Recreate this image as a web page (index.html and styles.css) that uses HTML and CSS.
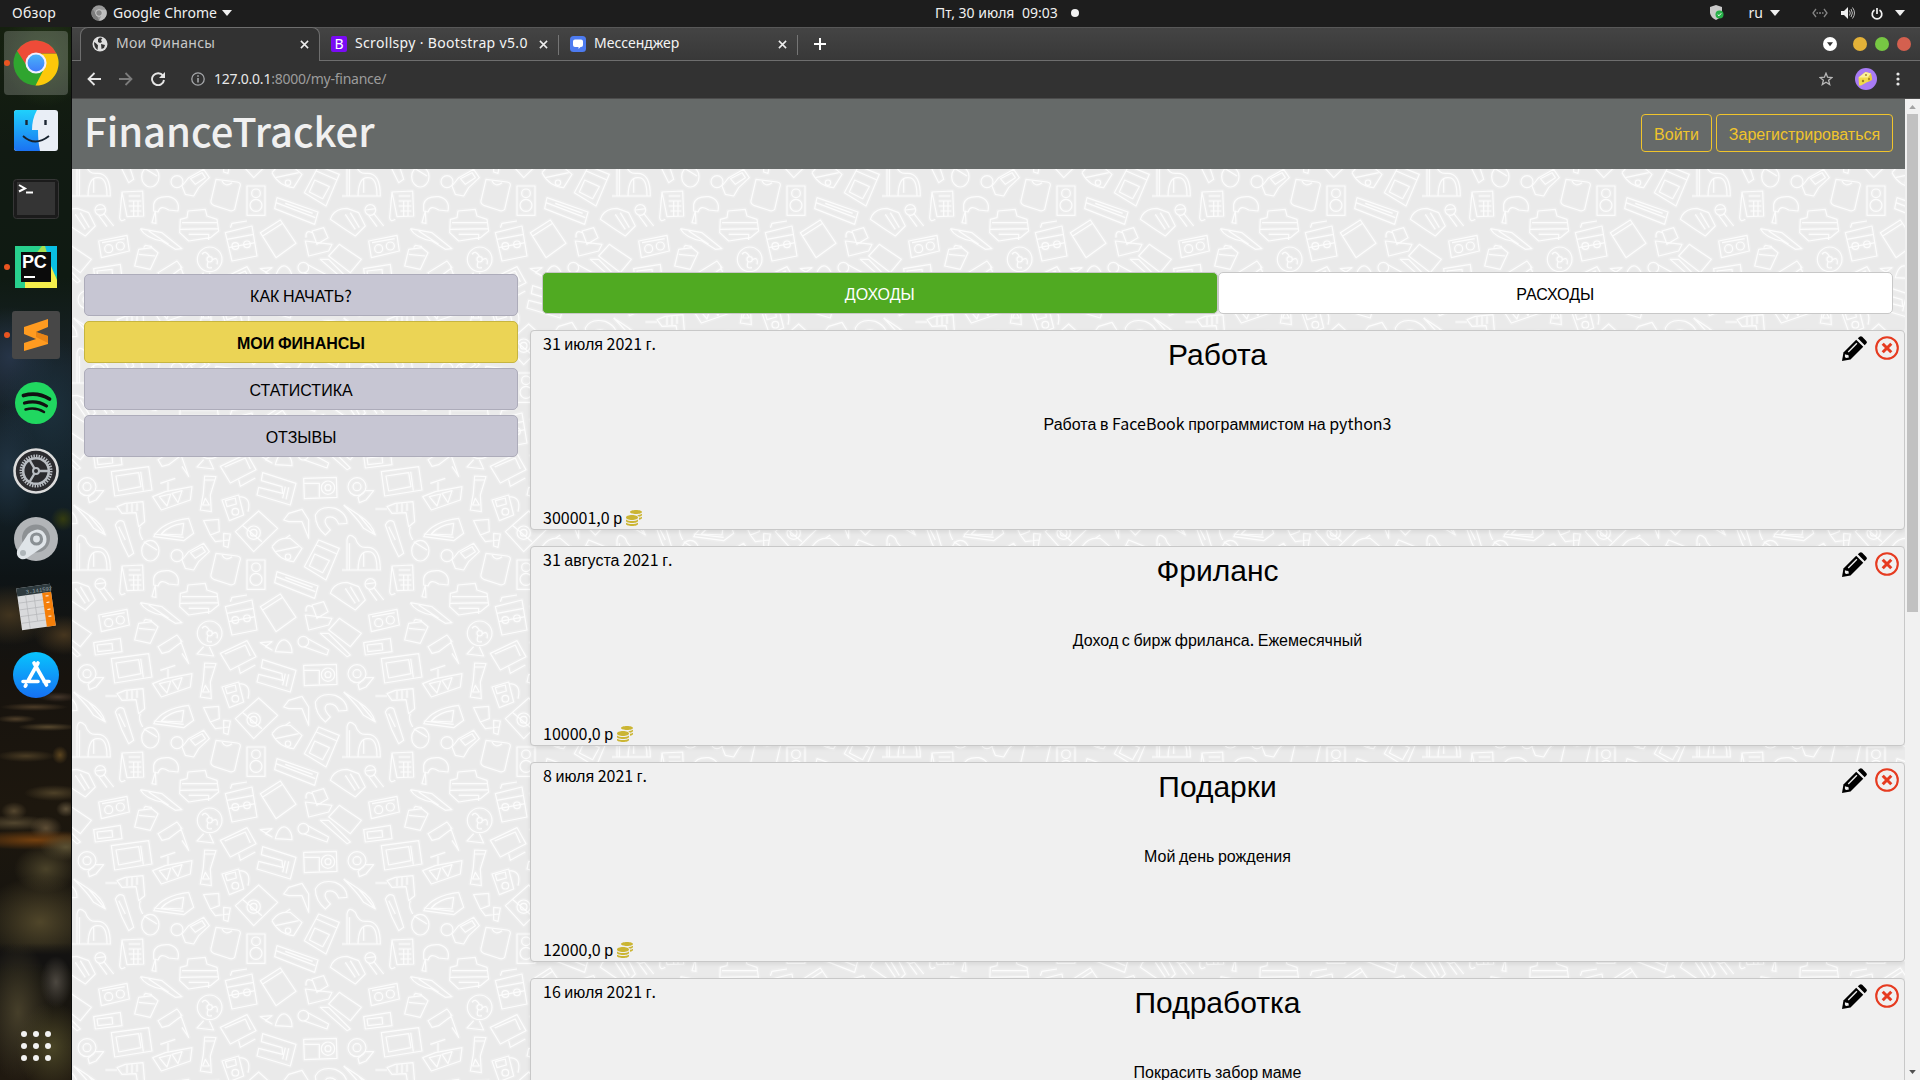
FILE: index.html
```html
<!DOCTYPE html>
<html lang="ru">
<head>
<meta charset="utf-8">
<title>Мои Финансы</title>
<link rel="stylesheet" href="styles.css">
</head>
<body>
<svg class="sprite" aria-hidden="true">
  <symbol id="pencil" viewBox="0 0 24 24">
    <path d="M1.4 15.8 13.6 3.6l6.8 6.8L8.200 22.600 0 24z"/>
    <path d="M15.200 2.200 16.900.7q1.300-1.100 2.500.1l3.900 3.900q1.200 1.200 0 2.500l-1.500 1.700z"/>
    <path d="M6 15.300 14.300 7" stroke="#efefef" stroke-width="1.300" fill="none"/>
    <path d="M2.800 17.600v2.600l1.100.8 2.700-.3-.5-2.400-1.900-.2z" fill="#efefef"/>
  </symbol>
  <symbol id="remove" viewBox="0 0 24 24">
    <circle cx="12" cy="12" r="10.800" fill="none" stroke="#e63b20" stroke-width="2.100"/>
    <path d="m7.700 7.700 8.600 8.600m0-8.600-8.600 8.600" stroke="#e63b20" stroke-width="3"/>
  </symbol>
  <symbol id="coins" viewBox="0 0 512 512">
    <path fill="#cbb533" d="M0 405.300V448c0 35.300 86 64 192 64s192-28.700 192-64v-42.700C342.700 434.400 267.200 448 192 448S41.300 434.400 0 405.300zM320 128c106 0 192-28.700 192-64S426 0 320 0 128 28.700 128 64s86 64 192 64zM0 300.400V352c0 35.300 86 64 192 64s192-28.700 192-64v-51.600c-41.300 34-116.900 51.600-192 51.600S41.300 334.400 0 300.400zm416 11c57.300-11.100 96-31.700 96-55.400v-42.700c-23.200 16.400-57.300 27.600-96 34.500v63.600zM192 160C86 160 0 195.800 0 240s86 80 192 80 192-35.800 192-80-86-80-192-80zm219.300 56.300c60-10.800 100.700-32 100.700-56.300v-42.700c-35.500 25.100-96.500 38.600-160.700 41.800 29.500 14.300 51.200 33.500 60 57.200z"/>
  </symbol>
  <symbol id="close" viewBox="0 0 10 10"><path d="m1 1 8 8m0-8-8 8" fill="none" stroke="currentColor" stroke-width="1.700"/></symbol>
  <symbol id="caret" viewBox="0 0 10 6"><path d="M0 0h10L5 6z" fill="currentColor"/></symbol>
</svg>

<div class="desktop">
  <header class="topbar">
    <div class="topbar-left">
      <span class="overview">Обзор</span>
      <svg width="16" height="16" viewBox="0 0 48 48"><circle cx="24" cy="24" r="23" fill="#9a9a9a"/><path d="M24 14h21A23 23 0 0 1 24 47l9-19z" fill="#bdbdbd"/><path d="M5 12l11 17 9 18A23 23 0 0 1 5 12z" fill="#7c7c7c"/><circle cx="24" cy="24" r="10" fill="#888" stroke="#ccc" stroke-width="3"/></svg>
      <span class="app-name">Google Chrome</span>
      <svg class="caret" width="10" height="6"><use href="#caret"/></svg>
    </div>
    <div class="topbar-clock"><span class="date">Пт, 30 июля</span><span class="time">09:03</span><i class="dot"></i></div>
    <div class="topbar-right">
      <svg class="shield" width="14" height="16" viewBox="0 0 14 16"><path d="M6 0 12 2v6q-1 5-6 7-5-2-6-7V2z" fill="#c9c9c9"/><circle cx="9.500" cy="9.500" r="4" fill="#27b049"/><path d="m7.700 9.500 1.300 1.300 2.200-2.500" stroke="#fff" fill="none"/></svg>
      <span class="lang">ru</span>
      <svg class="lang-caret" width="10" height="6"><use href="#caret"/></svg>
      <svg class="net" width="16" height="10" viewBox="0 0 16 10" fill="none" stroke="#858585" stroke-width="1.300"><path d="M4 1 1 5l3 4M12 1l3 4-3 4M4.500 5h1.500M7 5h2M10 5h1.500"/></svg>
      <svg class="volume" width="14" height="12" viewBox="0 0 14 12"><path d="M0 4h3l4-4v12L3 8H0z" fill="#eee"/><path d="M8.500 3.500q1.500 2.500 0 5M10 2q2.800 4 0 8M11.500.5q4 5.500 0 11" stroke="#bbb" fill="none"/></svg>
      <svg class="power" width="12" height="13" viewBox="0 0 12 13" fill="none" stroke="#f1f1f1" stroke-width="1.700"><path d="M3.500 3a4.800 4.800 0 1 0 5 0M6 1v6"/></svg>
      <svg width="10" height="6"><use href="#caret"/></svg>
    </div>
  </header>

  <div class="workspace">
    <nav class="dock">
      <div class="dock-item active running">
        <svg width="46" height="46" viewBox="0 0 48 48"><defs><linearGradient id="cb" x2="0" y2="1"><stop stop-color="#4ab3f8"/><stop offset="1" stop-color="#3f7dfa"/></linearGradient></defs><circle cx="24" cy="24" r="23.500" fill="#2fa52f"/><path d="M24 14h21.300A23.500 23.500 0 0 1 23.500 47.500L33 29z" fill="#fcc80a"/><path d="M4.200 11.200A23.500 23.500 0 0 1 45.300 14H24L15 28z" fill="#ee4b38"/><circle cx="24" cy="24" r="11" fill="#f1efff"/><circle cx="24" cy="24" r="8.800" fill="url(#cb)"/></svg>
      </div>
      <div class="dock-item">
        <svg width="44" height="42" viewBox="0 0 44 42"><defs><linearGradient id="fb" x2="0" y2="1"><stop stop-color="#1fd1fc"/><stop offset="1" stop-color="#1b72f2"/></linearGradient></defs><rect width="44" height="41" rx="3" fill="#e9eef6"/><path d="M3 0h20q-5 9-5 20h6q0 12 2 21H3q-3 0-3-3V3q0-3 3-3z" fill="url(#fb)"/><path d="M12.500 10v5M31.500 10v5" stroke="#1b2633" stroke-width="2.400"/><path d="M9 26q12 11 26 0" stroke="#17222e" stroke-width="1.800" fill="none"/></svg>
      </div>
      <div class="dock-item">
        <svg width="46" height="40" viewBox="0 0 46 40"><rect x=".5" y=".5" width="45" height="39" rx="3" fill="#1b1b1b" stroke="#363636"/><rect x="4" y="3" width="38" height="33" fill="#343434"/><path d="m6 6 6 3.500L6 12.500" stroke="#fff" stroke-width="2" fill="none"/><path d="M13 13.500h7" stroke="#fff" stroke-width="2"/></svg>
      </div>
      <div class="dock-item running">
        <svg width="42" height="42" viewBox="0 0 42 42"><path d="M0 0h42v42H0z" fill="#28d08d"/><path d="M27 0h15v30L32 24z" fill="#09bfe4"/><path d="M10 42V36L36 20l6 14v8z" fill="#f5ee4b"/><path d="M20 9 27 0h3l4 14z" fill="#a6e052"/><path d="M6 6h30v30H6z" fill="#0b0b0b"/><path d="M9 31h11" stroke="#fff" stroke-width="2"/></svg>
        <span class="pc-label">PC</span>
      </div>
      <div class="dock-item running">
        <svg width="48" height="48" viewBox="0 0 48 48"><rect width="48" height="48" rx="3" fill="#474747"/><path d="m12 16 24-8v8l-12 5 12 4v8l-24 7v-8l12-4-12-5z" fill="#ff9b20"/><path d="m24 21 12 4v7l-8-4-4-2z" fill="#e07c12" opacity=".7"/></svg>
      </div>
      <div class="dock-item">
        <svg width="42" height="42" viewBox="0 0 42 42" fill="none" stroke="#111" stroke-linecap="round"><circle cx="21" cy="21" r="21" fill="#20d760" stroke="none"/><path d="M8.500 13.500q14-4 26 3.500" stroke-width="3.800"/><path d="M9.500 21q12-3.500 22 3" stroke-width="3.200"/><path d="M10.500 27.500q10-3 18.500 2.500" stroke-width="2.500"/></svg>
      </div>
      <div class="dock-item">
        <svg width="46" height="46" viewBox="0 0 46 46" fill="none"><circle cx="23" cy="23" r="21.500" fill="#2b2b2f" stroke="#dcdcdc" stroke-width="2.600"/><circle cx="23" cy="23" r="15" stroke="#b8bcc2" stroke-width="3" stroke-dasharray="1.500 1.100"/><circle cx="23" cy="23" r="12.800" stroke="#b8bcc2" stroke-width="2.500"/><circle cx="23" cy="23" r="3" stroke="#b8bcc2" stroke-width="2"/><path d="M26 23h9.500M21.500 20.500 16.500 12M21.500 25.500 16.500 34" stroke="#b8bcc2" stroke-width="2.400"/></svg>
      </div>
      <div class="dock-item">
        <svg width="44" height="44" viewBox="0 0 44 44"><circle cx="22" cy="22" r="22" fill="#b2b5b8"/><circle cx="22" cy="21.500" r="14" fill="#8d9194"/><path d="m14 17-11 17q-1 6 4 8 3 1 6-1l16-11q5-4 3-11-4-8-11-6-4 1-7 4z" fill="#dfe4e8"/><circle cx="22.500" cy="22" r="5" fill="none" stroke="#8a9094" stroke-width="3.200"/><circle cx="9" cy="36" r="3" fill="#aeb5b9"/></svg>
      </div>
      <div class="dock-item">
        <svg width="42" height="48" viewBox="0 0 42 48"><g transform="rotate(-8 21 24)"><path d="M4 3h34v42H4z" fill="#d9dadc"/><path d="M4 3h34v8H4z" fill="#2e3a3e"/><path d="M29 11h9v34h-9z" fill="#f57f0a"/><path d="M4 17.800h25M4 24.600h25M4 31.400h25M4 38.200h25M12.300 11v34M20.600 11v27" stroke="#b4b6b9" stroke-width=".7"/><text x="13" y="9.500" class="calc-display">3.141592</text><path d="M32 14.500h3M32 21h3M32 28h3M32 35h3" stroke="#fff"/></g></svg>
      </div>
      <div class="dock-item">
        <svg width="46" height="46" viewBox="0 0 46 46" fill="none" stroke="#fff" stroke-width="3.600" stroke-linecap="round"><defs><linearGradient id="as" x2="0" y2="1"><stop stop-color="#08c4fd"/><stop offset="1" stop-color="#1670f3"/></linearGradient></defs><circle cx="23" cy="23" r="23" fill="url(#as)" stroke="none"/><path d="M25 11 15.500 28M21 11l12.500 22M10 29.500h15M31 29.500h5M13 33l-.7 1.200"/></svg>
      </div>
      <div class="dock-item app-grid"><i></i><i></i><i></i><i></i><i></i><i></i><i></i><i></i><i></i></div>
    </nav>

    <div class="browser">
      <div class="tabstrip">
        <div class="tab tab-active">
          <svg width="16" height="16" viewBox="0 0 16 16"><circle cx="8" cy="8" r="7.500" fill="#dedede"/><path d="M2 6q2 1 4 3.200l-.5 4.800Q2 11.500 2 6zM8 1.500 10.500 2l-1.500 2 1 2-2 1-2-1V3zM9 8l4 1-1 3-2.500 1z" fill="#323232"/></svg>
          <span class="t1">Мои Финансы</span>
          <svg class="tab-close" width="9" height="9"><use href="#close"/></svg>
        </div>
        <div class="tab">
          <span class="bs-icon">B</span>
          <span class="t2">Scrollspy · Bootstrap v5.0</span>
          <svg class="tab-close" width="9" height="9"><use href="#close"/></svg>
        </div>
        <div class="tab tab-last">
          <svg width="16" height="16" viewBox="0 0 16 16"><rect width="16" height="16" rx="3.500" fill="#4d7bf0"/><path d="M5 3.500h6q2 0 2 2V9q0 2-2 2h-.5L8.500 13V11H5Q3 11 3 9V5.500q0-2 2-2z" fill="#fff"/></svg>
          <span class="t3">Мессенджер</span>
          <svg class="tab-close" width="9" height="9"><use href="#close"/></svg>
        </div>
        <svg class="new-tab" width="12" height="12" viewBox="0 0 12 12"><path d="M6 0v12M0 6h12" stroke="#fff" stroke-width="2"/></svg>
        <div class="window-controls">
          <svg class="tab-search" width="14" height="14" viewBox="0 0 14 14"><circle cx="7" cy="7" r="7" fill="#fff"/><path d="M4 5.200h6L7 9.200z" fill="#333"/></svg>
          <i class="wc-min"></i><i class="wc-max"></i><i class="wc-close"></i>
        </div>
      </div>
      <div class="toolbar">
        <svg width="14" height="14" viewBox="0 0 14 14" fill="none" stroke="#e6e6e6" stroke-width="1.800"><path d="M14 7H1.500M7.500 1l-6 6 6 6"/></svg>
        <svg width="14" height="14" viewBox="0 0 14 14" fill="none" stroke="#7c7c7c" stroke-width="1.800"><path d="M0 7h12.500M6.500 1l6 6-6 6"/></svg>
        <svg width="14" height="14" viewBox="0 0 14 14" fill="none" stroke="#e6e6e6" stroke-width="1.900"><path d="M12 3.800A6 6 0 1 0 13 8"/><path d="M14 0v6H8z" fill="#e6e6e6" stroke="none"/></svg>
        <svg class="info" width="14" height="14" viewBox="0 0 14 14" fill="none" stroke="#a5a7aa" stroke-width="1.300"><circle cx="7" cy="7" r="6.200"/><path d="M7 6v4.500M7 3.300v1.500" stroke-width="1.600"/></svg>
        <span class="url"><b>127.0.0.1</b>:8000/my-finance/</span>
        <div class="toolbar-right">
          <svg width="14" height="14" viewBox="0 0 14 14" fill="none" stroke="#b8b8b8" stroke-width="1.300"><path d="m7 1.200 1.600 4 4.400.3-3.400 2.700 1.100 4.300L7 10.200l-3.700 2.300 1.100-4.300L1 5.500l4.400-.3z"/></svg>
          <svg class="avatar" width="22" height="22" viewBox="0 0 22 22"><circle cx="11" cy="11" r="11" fill="#a87bf5"/><path d="m3.500 9.500 7-5.500 5.500 1.500 1 6-11 6H4z" fill="#f1dc4b"/><path d="m3.500 9.500 7-5.500 5.500 1.500-3 4z" fill="#fbf09a"/><path d="m13 9.500 3-4 1 6.500-4 2z" fill="#e7c93c"/><circle cx="8" cy="13" r="1.200" fill="#9b7d25"/><circle cx="14" cy="11" r="1" fill="#9b7d25"/><circle cx="11" cy="7" r=".9" fill="#9b7d25"/></svg>
          <svg width="4" height="14" viewBox="0 0 4 14" fill="#e8e8e8"><circle cx="2" cy="2" r="1.600"/><circle cx="2" cy="7" r="1.600"/><circle cx="2" cy="12" r="1.600"/></svg>
        </div>
      </div>

      <div class="viewport">
        <div class="page">
          <header class="site-header">
            <h1 class="brand">FinanceTracker</h1>
            <div class="auth"><a class="btn-outline login">Войти</a><a class="btn-outline signup">Зарегистрироваться</a></div>
          </header>
          <div class="content">
            <aside class="menu">
              <a class="menu-item">КАК<span class="lat"> </span>НАЧАТЬ<span class="lat">?</span></a>
              <a class="menu-item current">МОИ<span class="lat"> </span>ФИНАНСЫ</a>
              <a class="menu-item">СТАТИСТИКА</a>
              <a class="menu-item">ОТЗЫВЫ</a>
            </aside>
            <main class="finance">
              <div class="switch"><a class="switch-item selected">ДОХОДЫ</a><a class="switch-item">РАСХОДЫ</a></div>
              <article class="card">
                <div class="card-date"><span class="lat">31 </span>июля<span class="lat"> 2021 </span>г<span class="lat">.</span></div>
                <div class="card-actions"><svg width="25" height="25"><use href="#pencil"/></svg><svg width="24" height="24"><use href="#remove"/></svg></div>
                <h3 class="card-title">Работа</h3>
                <p class="card-text">Работа<span class="lat"> </span>в<span class="lat"> FaceBook </span>программистом<span class="lat"> </span>на<span class="lat"> python3</span></p>
                <div class="card-sum"><span><span class="lat">300001,0 </span>р</span><svg width="16" height="16"><use href="#coins"/></svg></div>
              </article>
              <article class="card">
                <div class="card-date"><span class="lat">31 </span>августа<span class="lat"> 2021 </span>г<span class="lat">.</span></div>
                <div class="card-actions"><svg width="25" height="25"><use href="#pencil"/></svg><svg width="24" height="24"><use href="#remove"/></svg></div>
                <h3 class="card-title">Фриланс</h3>
                <p class="card-text">Доход<span class="lat"> </span>с<span class="lat"> </span>бирж<span class="lat"> </span>фриланса<span class="lat">. </span>Ежемесячный</p>
                <div class="card-sum"><span><span class="lat">10000,0 </span>р</span><svg width="16" height="16"><use href="#coins"/></svg></div>
              </article>
              <article class="card">
                <div class="card-date"><span class="lat">8 </span>июля<span class="lat"> 2021 </span>г<span class="lat">.</span></div>
                <div class="card-actions"><svg width="25" height="25"><use href="#pencil"/></svg><svg width="24" height="24"><use href="#remove"/></svg></div>
                <h3 class="card-title">Подарки</h3>
                <p class="card-text">Мой<span class="lat"> </span>день<span class="lat"> </span>рождения</p>
                <div class="card-sum"><span><span class="lat">12000,0 </span>р</span><svg width="16" height="16"><use href="#coins"/></svg></div>
              </article>
              <article class="card">
                <div class="card-date"><span class="lat">16 </span>июля<span class="lat"> 2021 </span>г<span class="lat">.</span></div>
                <div class="card-actions"><svg width="25" height="25"><use href="#pencil"/></svg><svg width="24" height="24"><use href="#remove"/></svg></div>
                <h3 class="card-title">Подработка</h3>
                <p class="card-text">Покрасить<span class="lat"> </span>забор<span class="lat"> </span>маме</p>
              </article>
            </main>
          </div>
        </div>
        <div class="scrollbar">
          <svg width="7" height="4" viewBox="0 0 10 6"><path d="M0 6h10L5 0z" fill="#a3a3a3"/></svg>
          <i class="thumb"></i>
          <svg width="7" height="4" viewBox="0 0 10 6"><path d="M0 0h10L5 6z" fill="#505050"/></svg>
        </div>
      </div>
    </div>
  </div>
</div>
</body>
</html>
```
FILE: styles.css
```css
* { box-sizing: border-box; }
body { margin: 0; width: 1920px; height: 1080px; overflow: hidden; background: #1d1d1d; font-family: "Liberation Sans", Arial, sans-serif; font-size: 16px; color: #000; }
svg { display: block; flex: none; }
.sprite { position: absolute; width: 0; height: 0; }
.lat { font-family: "Noto Sans CJK JP", sans-serif; white-space: pre; }
.desktop { display: flex; flex-direction: column; height: 1080px; }

/* System bar */
.topbar { display: grid; grid-template-columns: 935px 1fr auto; align-items: center; height: 27px; flex: none; background: #1d1d1d; color: #f0f0f0; font: 14px/26px "Noto Sans", sans-serif; white-space: nowrap; padding-bottom: 1px; }
.topbar-left { display: flex; align-items: center; padding-left: 12px; }
.overview { width: 79px; letter-spacing: .3px; }
.app-name { width: 110px; padding-left: 6px; letter-spacing: .05px; }
.caret { margin-left: 5px; }
.topbar-clock { display: flex; align-items: center; }
.date { width: 87px; }
.time { width: 49px; }
.dot { width: 8px; height: 8px; border-radius: 50%; background: #f2f2f2; }
.topbar-right { display: flex; align-items: center; justify-content: flex-end; padding-right: 15px; }
.lang { margin-left: 25px; }
.lang-caret { margin: 0 32px 0 7px; }
.volume { margin: 0 16px 0 13px; }
.power { margin-right: 12px; }

.workspace { display: flex; flex: 1; min-height: 0; }

/* Launcher */
.dock {
  display: flex; flex-direction: column; width: 72px; flex: none; padding-top: 2px; border-right: 1px solid #0b0c0c;
  background:
    radial-gradient(ellipse 36px 45px at 52px 1020px, #4a4526, transparent),
    radial-gradient(ellipse 34px 70px at 18px 985px, #463f2a, transparent),
    radial-gradient(ellipse 16px 26px at 56px 955px, #4c4740, transparent),
    linear-gradient(transparent 916px, #131211 928px, #131211 936px, transparent 946px),
    radial-gradient(ellipse 60px 46px at 40px 895px, #50462a, transparent),
    radial-gradient(ellipse 32px 24px at 46px 842px, #4a4229, transparent),
    radial-gradient(ellipse 26px 14px at 66px 820px, #5b5134, transparent),
    radial-gradient(ellipse 75px 10px at 36px 813px, #74400f, transparent),
    radial-gradient(ellipse 16px 12px at 46px 801px, #5d4d35, transparent),
    radial-gradient(ellipse 40px 8px at 14px 796px, #52462f, transparent),
    radial-gradient(ellipse 13px 9px at 14px 784px, #55472f, transparent),
    radial-gradient(ellipse 10px 8px at 66px 782px, #5e513a, transparent),
    radial-gradient(ellipse 30px 8px at 54px 766px, #4e4128, transparent),
    radial-gradient(ellipse 30px 6px at 26px 729px, #4a3c24, transparent),
    radial-gradient(ellipse 8px 9px at 60px 728px, #5c451f, transparent),
    radial-gradient(ellipse 30px 4px at 48px 700px, #57482e, transparent),
    radial-gradient(ellipse 20px 4px at 16px 692px, #50402a, transparent),
    radial-gradient(ellipse 34px 4px at 34px 680px, #4b3b27, transparent),
    radial-gradient(ellipse 20px 5px at 58px 670px, #44362a, transparent),
    radial-gradient(ellipse 45px 30px at 10px 588px, #41341f, transparent),
    radial-gradient(ellipse 30px 20px at 64px 608px, #46361f, transparent),
    radial-gradient(ellipse 12px 12px at 63px 492px, #343c10, transparent),
    radial-gradient(ellipse 30px 60px at 8px 440px, #213342, transparent),
    radial-gradient(ellipse 50px 70px at 50px 380px, #1c303c, transparent),
    radial-gradient(ellipse 45px 50px at 10px 330px, #263447, transparent),
    radial-gradient(ellipse 45px 50px at 45px 30px, #273a1b, transparent),
    linear-gradient(#15200f 0, #111a12 120px, #0f1a12 250px, #182229 340px, #14232b 450px, #0e1416 550px, #17130e 650px, #1d170e 780px, #14130f 940px, #201910 1053px);
}
.dock-item { position: relative; display: flex; align-items: center; justify-content: center; height: 64px; width: 64px; margin: 2px 4px; border-radius: 4px; flex: none; }
.dock-item.active { background: rgba(255, 255, 255, .2); }
.dock-item.running::before { content: ""; position: absolute; left: 0; top: 29px; width: 6px; height: 6px; border-radius: 50%; background: #e95420; }
.pc-label { position: absolute; left: 18px; top: 17px; color: #fff; font: bold 18px/20px "Liberation Sans", sans-serif; letter-spacing: -.3px; }
.calc-display { font: 5.500px "Liberation Mono", monospace; fill: #9fb0b3; }
.app-grid { display: grid; grid-template-columns: repeat(3, 6px); gap: 6px; align-content: center; margin-top: auto; margin-bottom: 2px; }
.app-grid i { width: 6px; height: 6px; border-radius: 50%; background: #f2f2f2; }

/* Browser chrome */
.browser { display: flex; flex-direction: column; flex: 1; min-width: 0; }
.tabstrip { display: flex; height: 34px; flex: none; border-top: 1px solid #585858; border-bottom: 1px solid #6e6e6e; background: linear-gradient(#444, #383838); color: #f4f4f4; font: 14px/30px "Noto Sans", sans-serif; padding-left: 8px; }
.tab { display: flex; align-items: center; width: 239px; height: 32px; padding: 0 11px; position: relative; white-space: nowrap; }
.tab::after { content: ""; position: absolute; right: 0; top: 7px; width: 1px; height: 20px; background: #757575; }
.tab span { margin: 0 0 2px 8px; }
.tab .t1 { letter-spacing: .3px; }
.tab .t2 { letter-spacing: .33px; }
.tab .bs-icon { margin: 0; width: 16px; height: 16px; border-radius: 2px; background: #7a0bf5; color: #fff; font: 14px/16px "Noto Sans", sans-serif; text-align: center; }
.tab-close { margin-left: auto; color: #eee; }
.tab-active { width: 240px; padding: 0 10px 1px 11px; height: 34px; background: #323232; border: 1px solid #6e6e6e; border-width: 1px 1px 0; border-radius: 8px 8px 0 0; margin-top: -1px; color: #c8c8c8; }
.tab-active::after { display: none; }
.new-tab { margin: 10px 0 0 16px; }
.window-controls { display: flex; align-items: center; margin-left: auto; padding-right: 9px; gap: 8px; }
.window-controls i { width: 14px; height: 14px; border-radius: 50%; }
.tab-search { margin-right: 8px; }
.wc-min { background: #e4b238; }
.wc-max { background: #77c743; }
.wc-close { background: #d4604f; }
.toolbar { display: flex; align-items: center; gap: 18px; height: 38px; flex: none; padding: 0 20px 2px 15px; background: #323232; border-bottom: 1px solid #4c4c4c; font: 14px/36px "Noto Sans", sans-serif; color: #9c9c9c; }
.url { margin-left: -9px; letter-spacing: -.24px; }
.url b { font-weight: 400; color: #e8e8e8; }
.info { margin-left: 8px; }
.toolbar-right { display: flex; align-items: center; margin-left: auto; }
.avatar { margin: 0 19px 0 22px; }

/* Page */
.viewport { display: flex; flex: 1; min-height: 0; }
.page { display: flex; flex-direction: column; width: 1833px; overflow: hidden; }
.site-header { display: flex; justify-content: space-between; height: 70px; flex: none; padding: 0 12px 0 12px; background: #666a69; }
.brand { margin: 0; color: #f0f0f0; font: 500 40px/63px "Noto Sans CJK JP", sans-serif; }
.auth { display: flex; gap: 4px; padding-top: 15px; }
.btn-outline { height: 38px; border: 1px solid #f0c42c; border-radius: 4px; color: #f0c42c; line-height: 39px; text-align: center; }
.login { width: 71px; }
.signup { width: 177px; }
.content {
  display: flex; flex: 1; min-height: 0; background-color: #eaeaea; background-size: 270px 187px; background-position: 0 104px;
  background-image: url("data:image/svg+xml,%3Csvg xmlns='http://www.w3.org/2000/svg' width='270' height='187' viewBox='0 0 810 561'%3E%3Cdefs%3E%3Cg id='a'%3E%3Ccircle cx='45' cy='80' r='27'/%3E%3Ccircle cx='45' cy='80' r='12'/%3E%3Cpath d='M48 112 70 92H95L72 120 52 128Z'/%3E%3Cpath d='M118 35 230 20 240 90 128 108ZM132 48 200 38 207 80 140 93ZM206 35 214 92'/%3E%3Cpath d='M242 110 280 95 360 80 355 120 268 150ZM262 110 285 138 296 102ZM300 100 318 128 330 92ZM265 70 310 55M288 66V95'/%3E%3Cpath d='M398 48 432 50 415 105 418 155 385 150 394 100ZM396 60H428M400 115 412 135H392Z'/%3E%3Cpath d='M445 580 525 542 552 590 475 630ZM458 582 520 555 535 588M500 620 505 640 550 615'/%3E%3Cpath d='M572 38 672 70 655 135 555 105 560 82 632 100 630 80 568 62ZM640 80 632 115M650 82 642 118'/%3E%3Cpath d='M695 55 793 52 795 112 697 116ZM697 70H742V112'/%3E%3Ccircle cx='768' cy='83' r='20'/%3E%3Ccircle cx='768' cy='83' r='9'/%3E%3Cpath d='M5 135 50 165Q90 190 100 225L65 205Q50 180 5 135M50 165 100 225'/%3E%3Cpath d='M100 147H135M135 140 160 130 213 125 218 185 200 200 192 158 150 160ZM165 130V156M180 130V156M195 130V152'/%3E%3Cpath d='M450 120 500 105 515 165 472 182ZM460 122 490 114 493 132 465 140ZM500 110Q540 110 528 155'/%3E%3Ccircle cx='490' cy='155' r='10'/%3E%3Cpath d='M245 230Q270 185 350 175L365 220 335 242ZM268 222Q290 195 335 190L330 225ZM245 222 335 232'/%3E%3Cpath d='M130 195Q140 175 155 185L185 280 170 290 150 250ZM140 200 160 240'/%3E%3Cellipse cx='235' cy='272' rx='26' ry='31'/%3E%3Cpath d='M215 245 255 270M205 200Q198 215 212 240'/%3E%3Cpath d='M395 182 440 178 442 215 415 225ZM415 225 430 245 470 240M455 220 475 222 468 262 455 258Z'/%3E%3Cpath d='M490 215 560 153 617 205 545 275ZM510 195 570 245'/%3E%3Ccircle cx='545' cy='218' r='20'/%3E%3Ccircle cx='545' cy='218' r='10'/%3E%3Cpath d='M635 180 650 160 690 148 710 180V235L690 185 650 185Z'/%3E%3Cpath d='M730 165Q745 135 790 145 825 160 825 190L800 192Q790 165 765 172 750 185 775 210L760 225Q730 200 730 165Z'/%3E%3Cpath d='M15 330V240Q20 215 40 235 50 265 75 262 115 260 115 330ZM22 330V250M48 330Q50 270 80 275 105 275 105 330M0 330H115M65 280V320'/%3E%3Ccircle cx='315' cy='287' r='18'/%3E%3Cpath d='M330 300 350 275 395 250 412 275 380 305 365 330 340 325ZM355 278 390 260 400 275 370 295Z'/%3E%3Cpath d='M432 280 495 288Q510 290 503 305L488 370Q480 378 468 372L425 358Q413 352 418 340ZM450 285Q460 305 480 290'/%3E%3Crect x='525' y='300' width='54' height='88'/%3E%3Ccircle cx='552' cy='322' r='13'/%3E%3Ccircle cx='552' cy='358' r='18'/%3E%3Cpath d='M150 318 212 315 215 390 165 392ZM170 330H205M170 345H208M170 360H208M175 375H208M185 345V390M198 345V390M150 318 143 395Q145 410 160 400'/%3E%3Cpath d='M245 355Q250 330 290 332 325 340 318 375L290 372Q265 355 258 378L245 375ZM250 375 240 410 252 412Z'/%3E%3Cpath d='M600 260Q620 230 655 235L690 265 665 305Q620 300 600 260M610 275 680 260M640 235 655 225'/%3E%3Ccircle cx='648' cy='290' r='8'/%3E%3Cpath d='M740 240 802 265 762 360 697 320ZM733 255 795 282M728 282 772 302 752 338 712 318Z'/%3E%3Cpath d='M615 335 738 378 728 415 608 368ZM612 350 730 395M640 352 722 382'/%3E%3Cpath d='M775 400Q785 368 825 367L860 380 880 420 850 450 812 425ZM820 385 850 430M835 380 862 425'/%3E%3Ccircle cx='85' cy='372' r='16'/%3E%3Cpath d='M80 388 105 422M95 382 125 420M70 372 102 368'/%3E%3Cpath d='M345 395 348 375 400 370 405 390 435 400 440 435 415 455 350 465 323 440 325 400ZM330 410 435 410M325 430 440 428M350 445H410V462'/%3E%3Cpath d='M460 440 540 420 555 510 480 525ZM465 460 545 445M470 485 550 470M475 425 480 412 525 405'/%3E%3Ccircle cx='490' cy='480' r='10'/%3E%3Ccircle cx='525' cy='475' r='10'/%3E%3Cpath d='M565 440 625 402 672 472 612 515ZM572 450 632 412'/%3E%3Cpath d='M720 435 755 425 768 455 735 475ZM700 465 780 475 770 495 710 510ZM720 440Q700 430 702 455'/%3E%3Cpath d='M80 465 165 448 172 495 88 515ZM90 470 158 458'/%3E%3Ccircle cx='110' cy='488' r='12'/%3E%3Ccircle cx='145' cy='480' r='12'/%3E%3Cpath d='M205 428 270 440 330 488 310 490 270 465Q220 455 205 428M230 435 290 475'/%3E%3Cpath d='M200 490 240 485 258 500 235 550 188 540ZM200 505 250 510M215 485 220 478 240 482'/%3E%3Ccircle cx='413' cy='520' r='37'/%3E%3Ccircle cx='413' cy='520' r='8'/%3E%3Cpath d='M413 512Q400 490 390 505M420 522Q440 510 435 535M408 528Q400 550 420 545M395 560 375 582 425 588 412 560'/%3E%3Cpath d='M770 510 802 475 868 520 835 560ZM745 520 770 520 835 585 825 590Z'/%3E%3Cpath d='M65 548 145 535 150 575 70 585ZM75 555 120 550 122 570 78 575Z'/%3E%3Cpath d='M258 560 315 525 330 545 290 575 270 580ZM325 540 350 610 330 580'/%3E%3Cpath d='M565 548 600 545 580 560 600 570ZM610 575Q620 535 640 540 660 550 660 578Z'/%3E%3Ccircle cx='694' cy='545' r='16'/%3E%3Cpath d='M705 535 770 570 765 585 695 560'/%3E%3C/g%3E%3Cg id='b'%3E%3Cuse href='%23a'/%3E%3Cuse href='%23a' x='-810'/%3E%3Cuse href='%23a' y='-561'/%3E%3Cuse href='%23a' x='-810' y='-561'/%3E%3C/g%3E%3C/defs%3E%3Crect width='810' height='561' fill='%23eaeaea'/%3E%3Cg fill='none' stroke='%23fff' stroke-linejoin='round'%3E%3Cuse href='%23b' stroke-width='12' opacity='.16'/%3E%3Cuse href='%23b' stroke-width='3.600' opacity='.85'/%3E%3C/g%3E%3C/svg%3E");
}
.menu { display: flex; flex-direction: column; gap: 5px; width: 434px; flex: none; margin-left: 12px; padding-top: 105px; }
.menu-item { height: 42px; border: 1px solid #adacba; border-radius: 5px; background: #c7c6d3; text-align: center; line-height: 43px; }
.menu-item .lat { line-height: 1; }
.menu-item.current { background: #ebd455; border-color: #c6b540; font-weight: 700; }
.finance { flex: 1; margin-left: 12px; padding-top: 103px; }
.switch { display: flex; height: 42px; margin: 0 12px 16px; }
.switch-item { flex: 1; border: 1px solid #c8c8c8; border-radius: 5px; background: #fff; text-align: center; line-height: 43px; }
.switch-item.selected { background: #50aa22; color: #fff; }
.card { display: grid; grid-template-columns: 1fr auto 1fr; grid-template-rows: 70px 1fr 26px; height: 200px; margin-bottom: 16px; border: 1px solid #c8c8c8; border-radius: 4px; background: #f0f0f0; box-shadow: 0 2px 4px rgba(0, 0, 0, .08); }
.card-date { grid-area: 1 / 1; padding-left: 12px; line-height: 24px; }
.card-actions { grid-area: 1 / 3; display: flex; justify-content: flex-end; gap: 8px; padding: 5px 5px 0 0; }
.card-title { grid-area: 1 / 2; margin: 0; font-size: 30px; font-weight: 400; line-height: 48px; text-align: center; }
.card-text { grid-area: 2 / 1 / 3 / 4; margin: 0; text-align: center; line-height: 44px; }
.card-sum { grid-area: 3 / 1; display: flex; align-items: center; padding: 3px 0 0 12px; line-height: 23px; }
.card-sum svg { margin-left: 4px; }
.scrollbar { display: flex; flex-direction: column; align-items: center; justify-content: space-between; width: 15px; padding: 6px 0; background: #f1f1f1; }
.thumb { width: 11px; height: 498px; margin: 5px 0 auto; background: #c1c1c1; }
```
